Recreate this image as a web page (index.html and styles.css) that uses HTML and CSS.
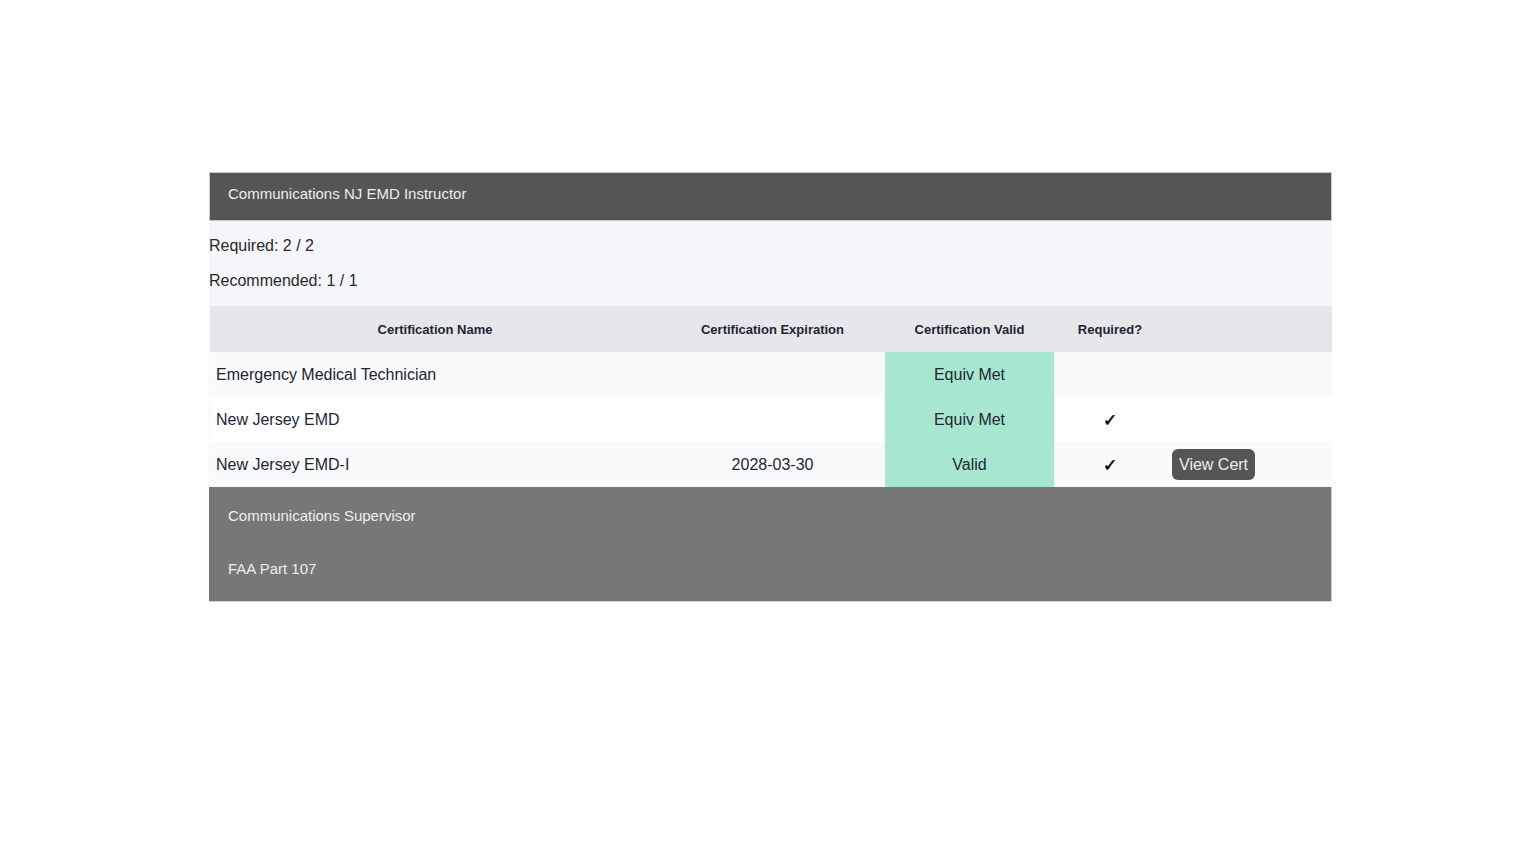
FILE: index.html
```html
<!DOCTYPE html>
<html>
<head>
<meta charset="utf-8">
<link rel="stylesheet" href="styles.css">
</head>
<body>
<div class="page">
  <div class="panel">
    <div class="panel-head">Communications NJ EMD Instructor</div>
    <div class="summary">
      <div class="line">Required: 2 / 2</div>
      <div class="line">Recommended: 1 / 1</div>
    </div>
    <table class="certs">
      <colgroup>
        <col class="c-name"><col class="c-exp"><col class="c-valid"><col class="c-req"><col class="c-act">
      </colgroup>
      <thead>
        <tr>
          <th>Certification Name</th>
          <th>Certification Expiration</th>
          <th>Certification Valid</th>
          <th>Required?</th>
          <th></th>
        </tr>
      </thead>
      <tbody>
        <tr class="odd">
          <td class="name">Emergency Medical Technician</td>
          <td class="center"></td>
          <td class="center ok">Equiv Met</td>
          <td class="center"></td>
          <td></td>
        </tr>
        <tr class="even">
          <td class="name">New Jersey EMD</td>
          <td class="center"></td>
          <td class="center ok">Equiv Met</td>
          <td class="center check">✓</td>
          <td></td>
        </tr>
        <tr class="odd">
          <td class="name">New Jersey EMD-I</td>
          <td class="center">2028-03-30</td>
          <td class="center ok">Valid</td>
          <td class="center check">✓</td>
          <td class="act"><button class="btn">View Cert</button></td>
        </tr>
      </tbody>
    </table>
    <div class="others">
      <div class="other first">Communications Supervisor</div>
      <div class="other last">FAA Part 107</div>
    </div>
  </div>
</div>
</body>
</html>
```

FILE: styles.css
```css
html, body {
  margin: 0;
  padding: 0;
  background: #ffffff;
  font-family: "Liberation Sans", Arial, sans-serif;
}
.page {
  padding: 172px 0 0 209px;
}
.panel {
  width: 1123px;
  background: #f5f6fa;
}
.panel-head {
  box-sizing: border-box;
  height: 49px;
  background: #555555;
  border: 1px solid #c8c8c8;
  color: #eeeeee;
  font-size: 15px;
  line-height: 18px;
  padding: 12px 18px 0 18px;
}
.summary {
  padding: 16px 0 16px 0;
  display: flex;
  flex-direction: column;
  gap: 17px;
  color: #2a2a2a;
  font-size: 16px;
  line-height: 18px;
}
.certs {
  border-collapse: collapse;
  margin-left: 1px;
  width: 1122px;
  table-layout: fixed;
}
.c-name { width: 450px; }
.c-exp { width: 225px; }
.c-valid { width: 169px; }
.c-req { width: 112px; }
.c-act { width: 166px; }
.certs th {
  background: #e5e7eb;
  height: 46px;
  padding: 0;
  font-size: 13px;
  font-weight: bold;
  color: #1f2433;
  text-align: center;
}
.certs td {
  height: 45px;
  padding: 0 6px;
  font-size: 16px;
  color: #222633;
}
.odd td { background: #f9fafb; }
.even td { background: #ffffff; }
.center { text-align: center; }
.certs td.ok { background: #a7e6cf; }
.certs td.check {
  font-family: "DejaVu Sans", sans-serif;
  font-size: 17px;
  font-weight: bold;
  color: #000;
  -webkit-text-stroke: 0.6px #000;
}
.btn {
  font-family: "Liberation Sans", Arial, sans-serif;
  font-size: 16px;
  color: #eeeeee;
  background: #555555;
  border: none;
  border-radius: 6px;
  height: 31px;
  padding: 0 7px;
  line-height: 31px;
}
.others {
  background: #777777;
  border-right: 1px solid #c8c8c8;
  border-bottom: 1px solid #d8d8d8;
  color: #eeeeee;
  font-size: 15px;
  line-height: 18px;
}
.other { padding: 19px 18px 16px 19px; }
.other.first { padding-top: 20px; }
.other.last { padding-bottom: 23px; }
```
